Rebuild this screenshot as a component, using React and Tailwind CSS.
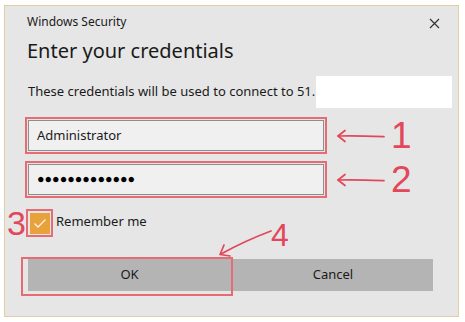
import React from 'react'

const RED = '#e2475a'

function Arrow({ className }) {
  return (
    <svg className={className} width="50" height="16" viewBox="0 0 50 16" fill="none">
      <path d="M2 8 C 16 7.5, 32 8, 48 8.6" stroke={RED} strokeWidth="1.7" strokeLinecap="round" />
      <path d="M9 2.5 L2 8 L9 13.5" stroke={RED} strokeWidth="1.7" strokeLinecap="round" strokeLinejoin="round" />
    </svg>
  )
}

function Num({ children, className }) {
  return (
    <span
      className={`font-normal ${className}`}
      style={{ color: RED, fontFamily: '"Liberation Sans", Arial, sans-serif' }}
    >
      {children}
    </span>
  )
}

function Field({ children, num }) {
  return (
    <div className="flex items-center">
      <div className="ml-[20px] w-[302px] h-[37px] border-2 border-[#e56b74] p-px">
        <div className="w-full h-full border border-[#8d8d8d] bg-[#f0f0f0] flex items-center pl-[8px] text-[13px] text-[#1b1b1b]">
          {children}
        </div>
      </div>
      <Arrow className="ml-[9px]" />
      <Num className="ml-[5px] text-[37px] leading-[30px] h-[30px]">{num}</Num>
    </div>
  )
}

export default function App() {
  return (
    <div
      className="w-[465px] h-[322px] bg-white overflow-hidden pt-[5px] pl-[4px]"
      style={{ fontFamily: '"Noto Sans", "Open Sans", sans-serif' }}
    >
      <div className="relative w-[455px] h-[312px] border border-[#e4cda3] bg-[#e6e6e6] flex flex-col">
        {/* title bar */}
        <div className="flex items-center justify-between pl-[22px] pr-[18px] pt-[8px] h-[24px]">
          <span className="text-[12px] text-[#1a1a1a]">Windows Security</span>
          <svg width="11" height="11" viewBox="0 0 11 11" className="mt-[2px]">
            <path d="M1 1 L10 10 M10 1 L1 10" stroke="#333" strokeWidth="1.2" />
          </svg>
        </div>

        <div className="pl-[22px] mt-[8px] text-[20px] leading-[26px] text-[#1a1a1a]">Enter your credentials</div>

        {/* description + redaction */}
        <div className="flex items-center mt-[12px] h-[32px]">
          <span className="pl-[23px] text-[13px] text-[#1a1a1a] whitespace-nowrap">
            These credentials will be used to connect to 51.
          </span>
          <div className="ml-auto mr-[6px] w-[136px] h-[32px] bg-white" />
        </div>

        <div className="mt-[9px] flex flex-col gap-[7px]">
          <Field num="1">Administrator</Field>
          <Field num="2">
            <span className="text-[12.5px] text-black leading-none">●●●●●●●●●●●●●</span>
          </Field>
        </div>

        {/* remember me */}
        <div className="flex items-center mt-[10px]">
          <Num className="ml-[2px] text-[34px] leading-[30px] h-[30px] w-[18px]">3</Num>
          <div className="ml-[1px] w-[27px] h-[28px] border-2 border-[#e56b74] flex items-center justify-center">
            <div className="w-[20px] h-[21px] bg-[#e7a23c] flex items-center justify-center">
              <svg width="14" height="11" viewBox="0 0 14 11" fill="none">
                <path d="M1.5 5.5 L5 9 L12.5 1.5" stroke="#fdf3e3" strokeWidth="1.3" />
              </svg>
            </div>
          </div>
          <span className="ml-[3px] text-[13px] text-[#1a1a1a] -mt-[3px]">Remember me</span>
        </div>

        {/* buttons */}
        <div className="mt-[21px] ml-[23px] flex gap-[2px]">
          <div className="w-[203px] h-[32px] bg-[#b4b4b4] flex items-center justify-center text-[13px] text-[#1a1a1a]">OK</div>
          <div className="w-[200px] h-[32px] bg-[#b4b4b4] flex items-center justify-center text-[13px] text-[#1a1a1a]">Cancel</div>
        </div>

        {/* annotation 4 overlay */}
        <div className="absolute left-[16px] top-[251px] w-[212px] h-[39px] border-2 border-[#e56b74] pointer-events-none" />
        <svg className="absolute left-[206px] top-[222px]" width="64" height="32" viewBox="0 0 64 32" fill="none">
          <path d="M60 3 C 44 9, 28 16, 10 26" stroke={RED} strokeWidth="1.7" strokeLinecap="round" />
          <path d="M13 17 L9 26.5 L19 28" stroke={RED} strokeWidth="1.7" strokeLinecap="round" strokeLinejoin="round" />
        </svg>
        <Num className="absolute left-[266px] top-[214px] text-[32px] leading-[30px]">4</Num>
      </div>
    </div>
  )
}
